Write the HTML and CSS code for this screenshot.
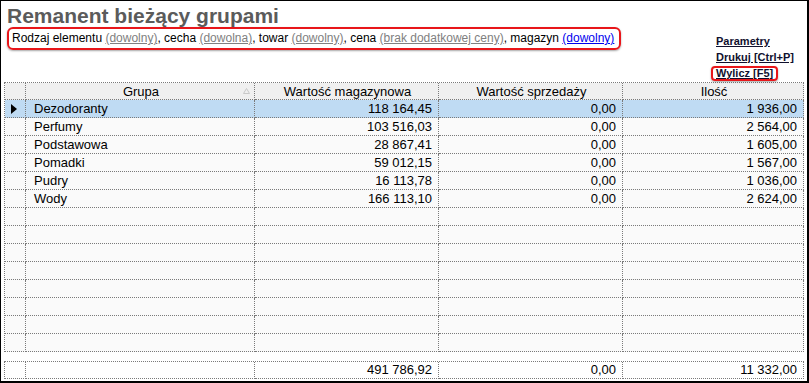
FILE: index.html
```html
<!DOCTYPE html>
<html lang="pl">
<head>
    <meta charset="UTF-8">
    <meta name="viewport" content="width=device-width, initial-scale=1.0">
    <title>Remanent bieżący grupami</title>
    <link rel="stylesheet" href="styles.css">
</head>
<body>
    <div class="frame">
        <div class="top">
            <div class="heading">
                <h1 class="title">Remanent bieżący grupami</h1>
                <div class="filters">Rodzaj elementu <a class="opt">(dowolny)</a>, cecha <a class="opt">(dowolna)</a>, towar <a class="opt">(dowolny)</a>, cena <a class="opt">(brak dodatkowej ceny)</a>, magazyn <a class="opt set">(dowolny)</a></div>
            </div>
            <div class="actions">
                <a>Parametry</a>
                <a>Drukuj [Ctrl+P]</a>
                <a class="marked">Wylicz [F5]</a>
            </div>
        </div>

        <table class="grid">
            <colgroup>
                <col class="c-ind"><col class="c-name"><col class="c-val"><col class="c-val"><col class="c-qty">
            </colgroup>
            <thead>
                <tr>
                    <th></th>
                    <th class="sorted">Grupa
                        <svg class="sort" width="7" height="6" viewBox="0 0 7 6"><path d="M3.5 0.5 L6.5 5.5 L0.5 5.5 Z" fill="none" stroke="#c9c9c9" stroke-width="1"/></svg>
                    </th>
                    <th>Wartość magazynowa</th>
                    <th>Wartość sprzedaży</th>
                    <th>Ilość</th>
                </tr>
            </thead>
            <tbody>
                <tr class="current"><td><span class="pointer"></span></td><td>Dezodoranty</td><td class="num">118 164,45</td><td class="num">0,00</td><td class="num">1 936,00</td></tr>
                <tr><td></td><td>Perfumy</td><td class="num">103 516,03</td><td class="num">0,00</td><td class="num">2 564,00</td></tr>
                <tr><td></td><td>Podstawowa</td><td class="num">28 867,41</td><td class="num">0,00</td><td class="num">1 605,00</td></tr>
                <tr><td></td><td>Pomadki</td><td class="num">59 012,15</td><td class="num">0,00</td><td class="num">1 567,00</td></tr>
                <tr><td></td><td>Pudry</td><td class="num">16 113,78</td><td class="num">0,00</td><td class="num">1 036,00</td></tr>
                <tr><td></td><td>Wody</td><td class="num">166 113,10</td><td class="num">0,00</td><td class="num">2 624,00</td></tr>
                <tr><td></td><td></td><td></td><td></td><td></td></tr>
                <tr><td></td><td></td><td></td><td></td><td></td></tr>
                <tr><td></td><td></td><td></td><td></td><td></td></tr>
                <tr><td></td><td></td><td></td><td></td><td></td></tr>
                <tr><td></td><td></td><td></td><td></td><td></td></tr>
                <tr><td></td><td></td><td></td><td></td><td></td></tr>
                <tr><td></td><td></td><td></td><td></td><td></td></tr>
                <tr><td></td><td></td><td></td><td></td><td></td></tr>
            </tbody>
        </table>

        <table class="grid totals">
            <colgroup>
                <col class="c-ind"><col class="c-name"><col class="c-val"><col class="c-val"><col class="c-qty">
            </colgroup>
            <tr><td></td><td></td><td class="num">491 786,92</td><td class="num">0,00</td><td class="num">11 332,00</td></tr>
        </table>
    </div>
</body>
</html>
```

FILE: styles.css
```css
body {
    margin: 0;
    font-family: "Liberation Sans", Arial, sans-serif;
    background-color: #fff;
}
.frame {
    width: 809px;
    height: 383px;
    box-sizing: border-box;
    border: solid #000;
    border-width: 1px 2px 2px 1px;
    padding: 0 3px;
}
.top {
    display: flex;
    height: 81px;
}
.heading {
    padding-top: 3px;
}
.title {
    margin: 0 0 0 3px;
    font-size: 21px;
    line-height: 23px;
    font-weight: bold;
    color: #5b5b5b;
}
.filters {
    display: inline-block;
    margin-left: 3px;
    padding: 0 5px 0 3px;
    border: 2px solid #e8161a;
    border-radius: 6px;
    box-shadow: 0 1px 2px rgba(0, 0, 0, 0.35);
    font-size: 12px;
    line-height: 19px;
    color: #000;
}
.opt {
    color: #808080;
    text-decoration: underline;
}
.opt.set {
    color: #0000ee;
}
.actions {
    margin-left: auto;
    align-self: flex-end;
    width: 88px;
    padding-bottom: 1px;
    display: flex;
    flex-direction: column;
    align-items: flex-start;
    font-size: 11px;
    line-height: 16px;
    font-weight: bold;
}
.actions a {
    color: #10102e;
    text-decoration: underline;
}
.actions .marked {
    margin: 1px 0 0 -5px;
    padding: 0 3px;
    line-height: 11px;
    border: 2px solid #e8161a;
    border-radius: 4px;
    box-shadow: 0 1px 2px rgba(0, 0, 0, 0.35);
}

/* grid */
.grid {
    width: 800px;
    table-layout: fixed;
    border-collapse: separate;
    border-spacing: 0;
    border-left: 1px dotted #7a7a7a;
    border-top: 1px dotted #7a7a7a;
    font-size: 13px;
    color: #000;
}
.c-ind { width: 21px; }
.c-name { width: 229px; }
.c-val { width: 184px; }
.c-qty { width: 181px; }
.grid th,
.grid td {
    border-right: 1px dotted #7a7a7a;
    border-bottom: 1px dotted #7a7a7a;
    padding: 0 6px 0 8px;
    white-space: nowrap;
    overflow: hidden;
}
.grid th {
    height: 16px;
    line-height: 15px;
    padding-bottom: 0;
    font-weight: normal;
    text-align: center;
    background-color: #f0f0f0;
}
.grid td {
    height: 17px;
    line-height: 16px;
    background-color: #fafafa;
}
.grid td.num {
    text-align: right;
}
.grid tr.current td {
    background-color: #bfdbf3;
}
.sorted {
    position: relative;
}
.sort {
    position: absolute;
    right: 4px;
    top: 5px;
}
.pointer {
    display: inline-block;
    margin-left: -2px;
    vertical-align: -1px;
    border-left: 6px solid #000;
    border-top: 5px solid transparent;
    border-bottom: 5px solid transparent;
}
.totals {
    margin-top: 9px;
}
.totals td {
    height: 16px;
    line-height: 16px;
    background-color: #fff;
}
```
